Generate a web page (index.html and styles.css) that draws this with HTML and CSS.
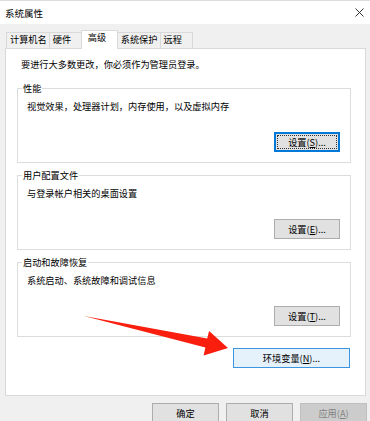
FILE: index.html
```html
<!DOCTYPE html>
<html lang="zh-CN">
<head>
<meta charset="utf-8">
<title>系统属性</title>
<link rel="stylesheet" href="styles.css">
</head>
<body>
<div class="window">
  <div class="titlebar">
    <span class="title">系统属性</span>
    <svg class="close" width="9" height="9" viewBox="0 0 9 9"><path d="M0.5 0.5 L8.5 8.5 M8.5 0.5 L0.5 8.5" stroke="#333" stroke-width="1" fill="none"/></svg>
  </div>
  <div class="client">
    <div class="tabs">
      <div class="tab">计算机名</div>
      <div class="tab">硬件</div>
      <div class="tab active">高级</div>
      <div class="tab">系统保护</div>
      <div class="tab">远程</div>
    </div>
    <div class="panel">
      <p class="notice">要进行大多数更改，你必须作为管理员登录。</p>
      <div class="group">
        <div class="group-label">性能</div>
        <p class="group-desc">视觉效果，处理器计划，内存使用，以及虚拟内存</p>
        <div class="group-actions"><button class="btn btn-default">设置(<u>S</u>)...</button></div>
      </div>
      <div class="group">
        <div class="group-label">用户配置文件</div>
        <p class="group-desc">与登录帐户相关的桌面设置</p>
        <div class="group-actions"><button class="btn">设置(<u>E</u>)...</button></div>
      </div>
      <div class="group">
        <div class="group-label">启动和故障恢复</div>
        <p class="group-desc">系统启动、系统故障和调试信息</p>
        <div class="group-actions"><button class="btn">设置(<u>T</u>)...</button></div>
      </div>
      <div class="panel-actions"><button class="btn btn-wide btn-hot">环境变量(<u>N</u>)...</button></div>
    </div>
    <div class="dialog-actions">
      <button class="btn btn-dlg">确定</button>
      <button class="btn btn-dlg">取消</button>
      <button class="btn btn-dlg" disabled>应用(<u>A</u>)</button>
    </div>
  </div>
  <svg class="arrow" width="370" height="421" viewBox="0 0 370 421">
    <polygon points="84,316 207.2,338.4 209.1,331 228,348 203.6,355.5 205.4,347.6" fill="#fa1e0e"/>
  </svg>
</div>
</body>
</html>
```

FILE: styles.css
```css
html, body {
  margin: 0;
  padding: 0;
}
body {
  width: 370px;
  height: 421px;
  overflow: hidden;
  background: #f0f0f0;
  font-family: "Noto Sans CJK SC", "Microsoft YaHei", sans-serif;
  font-size: 9.2px;
  color: #000;
}
.window {
  position: relative;
  height: 421px;
}
.titlebar {
  box-sizing: border-box;
  height: 24px;
  background: #fff;
  border-top: 1px solid #dcdcdc;
  display: flex;
  align-items: center;
  justify-content: space-between;
  padding: 0 6px 0 5px;
}
.title {
  font-size: 9.5px;
  line-height: 14px;
}
.close {
  display: block;
}
.client {
  padding-top: 6px;
}
.tabs {
  display: flex;
  align-items: flex-end;
  padding-left: 6px;
}
.tab {
  box-sizing: border-box;
  height: 16px;
  min-width: 33px;
  padding: 0 2px 0 3px;
  border: 1px solid #d9d9d9;
  border-bottom: none;
  margin-left: -1px;
  line-height: 13px;
  background: #f0f0f0;
  white-space: nowrap;
}
.tab:first-child {
  margin-left: 0;
}
.tab.active {
  height: 19px;
  min-width: 37px;
  padding-left: 6px;
  margin-bottom: -1px;
  background: #fff;
  position: relative;
  z-index: 1;
}
.panel {
  box-sizing: border-box;
  margin-left: 5px;
  width: 361px;
  height: 348px;
  border: 1px solid #d9d9d9;
  background: #fff;
  padding-top: 7px;
  display: flex;
  flex-direction: column;
}
.notice {
  margin: 0 0 0 15px;
  line-height: 16px;
}
.group {
  box-sizing: border-box;
  width: 334px;
  height: 75px;
  margin: 12px 0 0 11px;
  border: 1px solid #dcdcdc;
  padding: 0 10px 10px 9px;
  display: flex;
  flex-direction: column;
}
.notice + .group {
  margin-top: 16px;
}
.group-label {
  align-self: flex-start;
  margin: -9px 0 0 -5px;
  padding: 0 1px;
  background: #fff;
  line-height: 16px;
}
.group-desc {
  margin: 2px 0 0 0;
  line-height: 16px;
}
.group-actions {
  margin-top: auto;
  display: flex;
  justify-content: flex-end;
}
.panel-actions {
  margin: 11px 15px 0 0;
  display: flex;
  justify-content: flex-end;
}
.btn {
  box-sizing: border-box;
  width: 66px;
  height: 20px;
  padding: 0;
  border: 1px solid #adadad;
  background: #e1e1e1;
  font: inherit;
  color: #000;
  line-height: 18px;
  text-align: center;
}
.btn u {
  text-underline-offset: 1px;
}
.btn-default {
  border-color: #0078d7;
  box-shadow: inset 0 0 0 1px #0078d7;
  outline: 1px dotted #333;
  outline-offset: -4px;
}
.btn-wide {
  width: 117px;
}
.btn-hot {
  background: #e5f1fb;
  border-color: #3d95e0;
}
.btn-dlg {
  width: 67px;
}
.btn:disabled {
  background: #cccccc;
  border-color: #bfbfbf;
  color: #838383;
}
.dialog-actions {
  margin-top: 7px;
  display: flex;
  justify-content: flex-end;
  gap: 7px;
  padding-right: 3px;
}
.arrow {
  position: absolute;
  left: 0;
  top: 0;
  pointer-events: none;
}
```
